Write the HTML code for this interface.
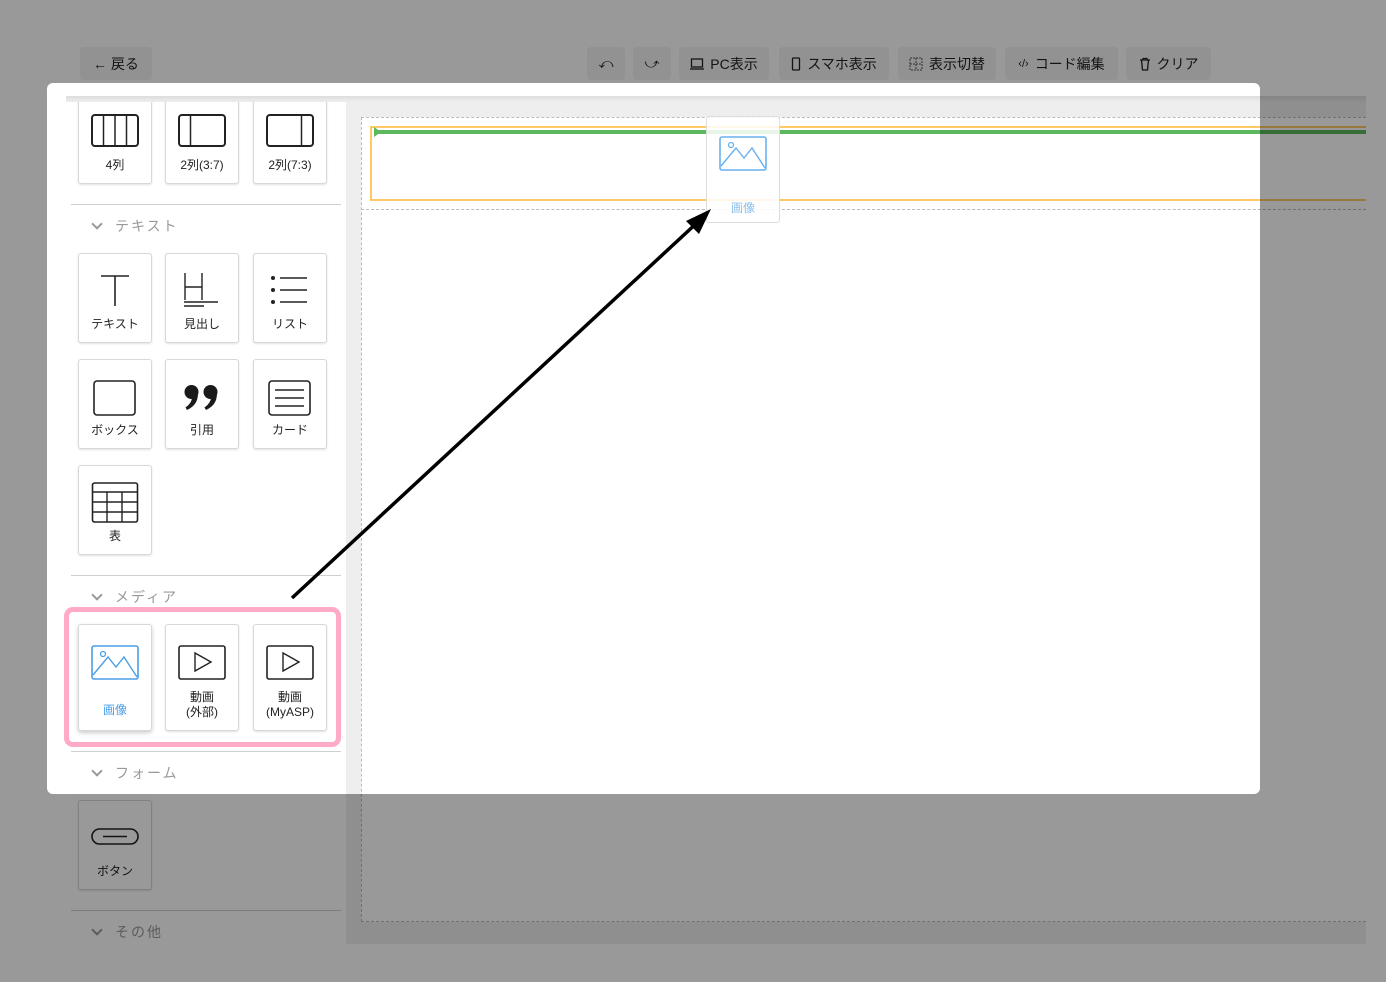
<!DOCTYPE html>
<html><head><meta charset="utf-8"><style>
*{box-sizing:border-box;margin:0;padding:0}
body{width:1386px;height:982px;overflow:hidden;background:#fff;position:relative;font-family:"Liberation Sans","Noto Sans CJK JP",sans-serif;color:#222}
.abs{position:absolute}
.btn{position:absolute;top:47px;height:33px;background:#f3f3f3;border-radius:4px;font-size:14px;display:flex;align-items:center;justify-content:center;gap:6px;color:#222}
.card{position:absolute;width:74px;background:#fff;border:1px solid #d8d8d8;border-radius:3px;box-shadow:0 1px 2px rgba(0,0,0,.12);display:flex;flex-direction:column;align-items:center;font-size:12px;color:#222}
.card svg{margin-top:20px}
.card span{margin-top:auto;margin-bottom:10px;text-align:center;line-height:15px}
.sep{position:absolute;left:71px;width:270px;height:1px;background:#cfcfcf}
.hd{position:absolute;left:91px;font-size:14px;color:#999;letter-spacing:2px}
.hd:before{content:"";display:inline-block;width:6px;height:6px;border-right:2px solid #999;border-bottom:2px solid #999;transform:rotate(45deg);margin:0 14px 3px 2px}
</style></head><body>
<div class="btn" style="left:80px;width:72px">← 戻る</div>
<div class="btn" style="left:587px;width:38px">⤺</div>
<div class="btn" style="left:633px;width:38px">⤻</div>
<div class="btn" style="left:679px;width:90px"><svg width="14" height="12"><rect x="1.5" y="1" width="11" height="8" fill="none" stroke="#222" stroke-width="1.3"/><line x1="0" y1="11" x2="14" y2="11" stroke="#222" stroke-width="1.3"/></svg>PC表示</div>
<div class="btn" style="left:779px;width:110px"><svg width="10" height="14"><rect x="1.5" y="1" width="7" height="12" rx="1" fill="none" stroke="#222" stroke-width="1.3"/></svg>スマホ表示</div>
<div class="btn" style="left:898px;width:98px"><svg width="14" height="14"><rect x="1" y="1" width="12" height="12" fill="none" stroke="#555" stroke-dasharray="2 1"/><line x1="7" y1="1" x2="7" y2="13" stroke="#555" stroke-dasharray="2 1"/><line x1="1" y1="7" x2="13" y2="7" stroke="#555" stroke-dasharray="2 1"/></svg>表示切替</div>
<div class="btn" style="left:1005px;width:113px"><span style="font-size:11px">‹/›</span>コード編集</div>
<div class="btn" style="left:1126px;width:85px"><svg width="12" height="14"><path d="M1 3h10M4 3V1.5h4V3M2.5 3l1 10h5l1-10" fill="none" stroke="#222" stroke-width="1.3"/></svg>クリア</div>

<div class="abs" style="left:346px;top:102px;width:1020px;height:842px;background:#eee"></div>
<div class="abs" style="left:361px;top:117px;width:1005px;height:805px;background:#fff;border:1px dashed #bbb;border-right:none"></div>
<div class="abs" style="left:361px;top:117px;width:1005px;height:93px;border-bottom:1px dashed #bbb"></div>
<div class="abs" style="left:370px;top:126px;width:996px;height:75px;border:2px solid #ffc867;border-right:none"></div>
<div class="abs" style="left:374px;top:130px;width:992px;height:4px;background:#5cb85c"></div>
<svg class="abs" style="left:373px;top:127px" width="10" height="10"><path d="M1 0L8 5L1 10Z" fill="#5cb85c"/></svg>

<!-- sidebar -->
<div class="card" style="left:78px;top:98px;height:86px"><svg width="48" height="34" style="margin-top:15px"><rect x="1" y="1" width="46" height="31" rx="3" fill="none" stroke="#222" stroke-width="2"/><path d="M12.5 1v31M24 1v31M35.5 1v31" stroke="#222" stroke-width="1.5"/></svg><span>4列</span></div>
<div class="card" style="left:165px;top:98px;height:86px"><svg width="48" height="34" style="margin-top:15px"><rect x="1" y="1" width="46" height="31" rx="3" fill="none" stroke="#222" stroke-width="2"/><path d="M12.5 1v31" stroke="#222" stroke-width="1.5"/></svg><span>2列(3:7)</span></div>
<div class="card" style="left:253px;top:98px;height:86px"><svg width="48" height="34" style="margin-top:15px"><rect x="1" y="1" width="46" height="31" rx="3" fill="none" stroke="#222" stroke-width="2"/><path d="M35.5 1v31" stroke="#222" stroke-width="1.5"/></svg><span>2列(7:3)</span></div>
<div class="abs" style="left:66px;top:96px;width:1300px;height:6px;background:linear-gradient(#ddd,#eee)"></div>
<div class="sep" style="top:204px"></div><div class="hd" style="top:216px">テキスト</div>
<div class="card" style="left:78px;top:253px;height:90px"><svg width="48" height="34"><path d="M10 2h28M24 2v30" stroke="#222" stroke-width="1.6" fill="none"/></svg><span>テキスト</span></div>
<div class="card" style="left:165px;top:253px;height:90px"><svg width="48" height="36" style="margin-top:17px"><path d="M7 2v27M24 2v27M7 16h17M6 31h34M6 35h20" stroke="#222" stroke-width="1.4" fill="none"/></svg><span>見出し</span></div>
<div class="card" style="left:253px;top:253px;height:90px"><svg width="48" height="34"><g fill="#222"><circle cx="7" cy="4" r="2"/><circle cx="7" cy="16" r="2"/><circle cx="7" cy="28" r="2"/></g><path d="M14 4h27M14 16h27M14 28h27" stroke="#222" stroke-width="1.5"/></svg><span>リスト</span></div>
<div class="card" style="left:78px;top:359px;height:90px"><svg width="48" height="36"><rect x="3" y="1" width="41" height="34" rx="3" fill="none" stroke="#222" stroke-width="1.6"/></svg><span>ボックス</span></div>
<div class="card" style="left:165px;top:359px;height:90px"><svg width="48" height="36"><g fill="#1a1a1a"><circle cx="13.5" cy="12" r="7"/><path d="M19.5 10 Q22 24 9 30 L7.5 27.5 Q14 23 14 17 Z"/><circle cx="32.5" cy="12" r="7"/><path d="M38.5 10 Q41 24 28 30 L26.5 27.5 Q33 23 33 17 Z"/></g></svg><span>引用</span></div>
<div class="card" style="left:253px;top:359px;height:90px"><svg width="48" height="36"><rect x="3" y="1" width="41" height="34" rx="3" fill="none" stroke="#222" stroke-width="1.6"/><path d="M9 10h29M9 18h29M9 26h29" stroke="#222" stroke-width="1.4"/></svg><span>カード</span></div>
<div class="card" style="left:78px;top:465px;height:90px"><svg width="48" height="42" style="margin-top:16px"><rect x="1.5" y="1" width="45" height="39" rx="2" fill="none" stroke="#222" stroke-width="1.6"/><path d="M1.5 10h45M1.5 20h45M1.5 30h45M16 10v30M31 10v30" stroke="#222" stroke-width="1.4"/></svg><span>表</span></div>
<div class="sep" style="top:575px"></div><div class="hd" style="top:587px">メディア</div>
<div class="card" style="left:78px;top:624px;height:107px;box-shadow:0 2px 4px rgba(0,0,0,.2)"><svg width="48" height="36"><rect x="1" y="1" width="46" height="33" rx="2" fill="none" stroke="#4a9fe8" stroke-width="1.6"/><circle cx="12" cy="9" r="2.5" fill="none" stroke="#4a9fe8" stroke-width="1.3"/><path d="M2 30l15-18 8 10 8-10 13 20" fill="none" stroke="#4a9fe8" stroke-width="1.4"/></svg><span style="color:#4a9fe8;margin-bottom:12px">画像</span></div>
<div class="card" style="left:165px;top:624px;height:107px"><svg width="48" height="36"><rect x="1" y="1" width="46" height="33" rx="2" fill="none" stroke="#222" stroke-width="1.6"/><path d="M17 8v18l16-9z" fill="none" stroke="#222" stroke-width="1.4"/></svg><span>動画<br>(外部)</span></div>
<div class="card" style="left:253px;top:624px;height:107px"><svg width="48" height="36"><rect x="1" y="1" width="46" height="33" rx="2" fill="none" stroke="#222" stroke-width="1.6"/><path d="M17 8v18l16-9z" fill="none" stroke="#222" stroke-width="1.4"/></svg><span>動画<br>(MyASP)</span></div>
<div class="sep" style="top:751px"></div><div class="hd" style="top:763px">フォーム</div>
<div class="card" style="left:78px;top:800px;height:90px"><svg width="48" height="20" style="margin-top:26px"><rect x="1" y="2" width="46" height="15" rx="7.5" fill="none" stroke="#222" stroke-width="1.6"/><path d="M12 9.5h24" stroke="#222" stroke-width="1.6"/></svg><span>ボタン</span></div>
<div class="sep" style="top:910px"></div><div class="hd" style="top:922px">その他</div>

<!-- overlay -->
<div class="abs" style="left:47px;top:83px;width:1213px;height:711px;border-radius:6px;box-shadow:0 0 0 2000px rgba(0,0,0,.4)"></div>

<div class="abs" style="left:64px;top:607px;width:277px;height:140px;border:5px solid #ffabc7;border-radius:9px"></div>
<!-- ghost -->
<div class="abs" style="left:706px;top:116px;width:74px;height:107px;background:rgba(255,255,255,.85);border:1px solid #ddd;border-radius:3px;font-size:12px;color:#8cc0ee;text-align:center">
<svg width="48" height="36" style="margin-top:19px"><rect x="1" y="1" width="46" height="33" rx="2" fill="none" stroke="#6ab0ee" stroke-width="1.6"/><circle cx="12" cy="9" r="2.5" fill="none" stroke="#6ab0ee" stroke-width="1.3"/><path d="M2 30l15-18 8 10 8-10 13 20" fill="none" stroke="#6ab0ee" stroke-width="1.4"/></svg>
<div style="margin-top:24px">画像</div></div>
<svg class="abs" style="left:0;top:0" width="1386" height="982"><line x1="292" y1="598" x2="700" y2="220" stroke="#000" stroke-width="3.5"/><path d="M711 209L686 221L699 234Z" fill="#000"/></svg>
</body></html>
